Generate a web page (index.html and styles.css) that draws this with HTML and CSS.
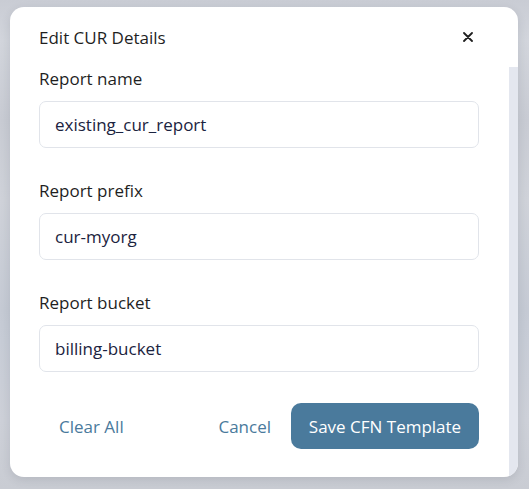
FILE: index.html
```html
<!DOCTYPE html>
<html lang="en">
<head>
<meta charset="utf-8">
<title>Edit CUR Details</title>
<link rel="stylesheet" href="styles.css">
</head>
<body>
<div class="backdrop">
  <div class="modal" role="dialog" aria-label="Edit CUR Details">
    <div class="modal-header">
      <h2 class="modal-title">Edit CUR Details</h2>
      <button class="close-btn" aria-label="Close">
        <svg width="10" height="10" viewBox="0 0 10 10"><path d="M1 1L9 9M9 1L1 9" stroke="#1f1f1f" stroke-width="1.8" stroke-linecap="round"/></svg>
      </button>
    </div>
    <div class="modal-main">
      <div class="modal-body">
        <div class="field">
          <label class="field-label">Report name</label>
          <div class="field-input">existing_cur_report</div>
        </div>
        <div class="field">
          <label class="field-label">Report prefix</label>
          <div class="field-input">cur-myorg</div>
        </div>
        <div class="field">
          <label class="field-label">Report bucket</label>
          <div class="field-input">billing-bucket</div>
        </div>
        <div class="modal-footer">
          <button class="text-btn">Clear All</button>
          <div class="footer-right">
            <button class="text-btn">Cancel</button>
            <button class="primary-btn">Save CFN Template</button>
          </div>
        </div>
      </div>
      <div class="scroll-track"></div>
    </div>
  </div>
</div>
</body>
</html>
```
FILE: styles.css
```css
* { box-sizing: border-box; }
html, body { margin: 0; padding: 0; }
body {
  width: 529px;
  height: 489px;
  overflow: hidden;
  font-family: "Open Sans", "DejaVu Sans", sans-serif;
  background: #cdd0d8;
}
.backdrop {
  width: 529px;
  height: 489px;
  padding: 7px 11px 12px 10px;
  background:
    linear-gradient(180deg, #c9ccd4 0px, #d2d5dc 40px, #c8cbd3 120px, #cfd2d9 200px, #c5cad4 310px, #c7ccd6 340px, #cdd0d8 420px, #c9ccd3 489px);
}
.modal {
  width: 508px;
  height: 470px;
  background: #ffffff;
  border-radius: 14px;
  display: flex;
  flex-direction: column;
  overflow: hidden;
  box-shadow: 0 3px 10px rgba(60, 64, 80, 0.14);
}
.modal-header {
  height: 60px;
  flex: none;
  display: flex;
  align-items: center;
  justify-content: space-between;
  padding: 0 45px 0 29px;
}
.modal-title {
  margin: 0;
  font-size: 17px;
  font-weight: 500;
  color: #1f1f1f;
}
.close-btn {
  border: 0;
  background: none;
  padding: 0;
  width: 10px;
  height: 10px;
  display: flex;
}
.modal-main {
  flex: 1;
  display: flex;
  min-height: 0;
}
.modal-body {
  flex: 1;
  padding: 0 30px 0 29px;
}
.scroll-track {
  width: 9px;
  flex: none;
  background: #e4e7ef;
}
.field {
  display: flex;
  flex-direction: column;
  gap: 10px;
  margin-bottom: 31px;
}
.field-label {
  font-size: 17px;
  line-height: 24px;
  font-weight: 500;
  color: #1f1f1f;
}
.field-input {
  height: 47px;
  border: 1px solid #e1e4ea;
  border-radius: 7px;
  padding: 0 15px;
  display: flex;
  align-items: center;
  font-size: 17px;
  color: #1b2340;
}
.modal-footer {
  display: flex;
  align-items: center;
  justify-content: space-between;
  height: 46px;
}
.footer-right {
  display: flex;
  align-items: center;
}
.text-btn {
  border: 0;
  background: none;
  font-family: inherit;
  font-size: 17px;
  color: #4a7a9c;
  padding: 0 20px;
  height: 46px;
}
.primary-btn {
  border: 0;
  background: #4a7a9c;
  color: #ffffff;
  font-family: inherit;
  font-size: 17px;
  font-weight: 500;
  height: 46px;
  width: 188px;
  border-radius: 10px;
}
```
